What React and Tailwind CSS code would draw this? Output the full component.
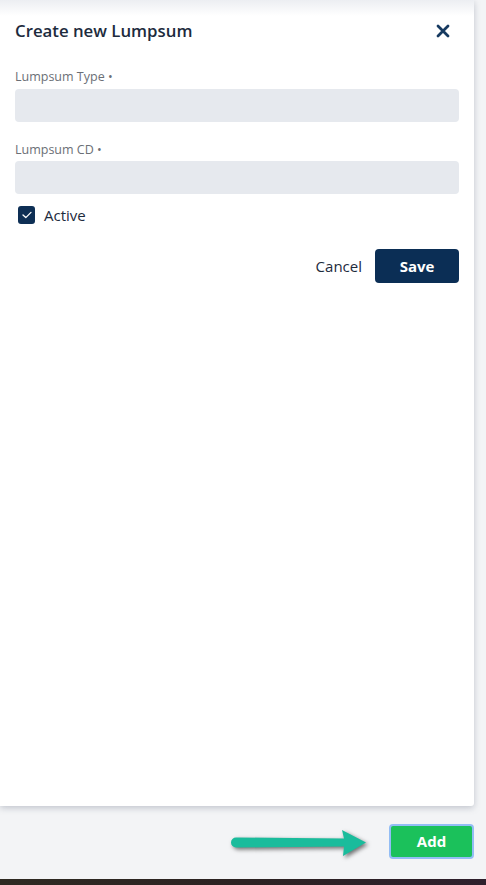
import React from "react";

export default function App() {
  return (
    <div
      className="w-[486px] h-[885px] bg-[#f3f4f6] flex flex-col overflow-hidden"
      style={{ fontFamily: '"Open Sans", "Noto Sans", sans-serif' }}
    >
      <div className="relative w-[474px] h-[806px] bg-white shadow-[0_2px_6px_rgba(100,110,130,0.35)] rounded-br-[3px] flex flex-col px-[15px] pt-[19px]">
        <div className="absolute left-0 right-0 top-0 h-[16px] bg-gradient-to-b from-[#eceef2] to-white" />
        <div className="relative flex items-center justify-between h-[24px]">
          <h1 className="text-[16.8px] font-semibold text-[#1d2b3d]">Create new Lumpsum</h1>
          <svg width="14" height="14" viewBox="0 0 14 14" className="mr-[9px]">
            <path d="M2 2 L12 12 M12 2 L2 12" stroke="#163a60" strokeWidth="2.8" strokeLinecap="round" />
          </svg>
        </div>
        <label className="mt-[26px] text-[12.5px] leading-[16px] text-[#6b6f76]">Lumpsum Type •</label>
        <div className="mt-[4px] h-[33px] w-full rounded-[4px] bg-[#e6e9ee]" />
        <label className="mt-[20px] text-[12.5px] leading-[16px] text-[#6b6f76]">Lumpsum CD •</label>
        <div className="mt-[3px] h-[33px] w-full rounded-[4px] bg-[#e6e9ee]" />
        <div className="mt-[12px] h-[18px] flex items-center gap-[9px] pl-[3px]">
          <div className="w-[17px] h-[18px] rounded-[3px] bg-[#0e2f55] flex items-center justify-center">
            <svg width="10" height="8" viewBox="0 0 10 8">
              <path d="M1 4 L3.8 6.6 L9 1.4" stroke="white" strokeWidth="1.3" fill="none" strokeLinecap="round" strokeLinejoin="round" />
            </svg>
          </div>
          <span className="text-[15px] leading-[18px] text-[#1d2b3d]">Active</span>
        </div>
        <div className="mt-[25px] flex items-center justify-end gap-[13px]">
          <span className="text-[15px] text-[#1d2b3d]">Cancel</span>
          <button className="w-[84px] h-[34px] rounded-[4px] bg-[#0b2e55] text-white text-[15px] font-bold">Save</button>
        </div>
      </div>
      <div className="flex items-center justify-end h-[73px] pr-[12px] pb-[2px]">
        <svg width="140" height="32" viewBox="0 0 140 32" className="mr-[19px] mt-[4px]" style={{ filter: "drop-shadow(2px 2px 2px rgba(0,0,0,0.55))" }}>
          <path
            d="M6 9.5 L114 10.5 L112 2 L136 14.5 L113 28 L114 18.5 L6 19.5 A5 5 0 0 1 6 9.5 Z"
            fill="#1abc9c"
          />
        </svg>
        <button className="w-[85px] h-[35px] rounded-[4px] bg-[#1bc15b] border-2 border-[#93bdf5] text-white text-[15px] font-bold">Add</button>
      </div>
      <div className="flex-1 bg-gradient-to-r from-[#2e2a22] via-[#2c2222] to-[#2e1f2c]" />
    </div>
  );
}
